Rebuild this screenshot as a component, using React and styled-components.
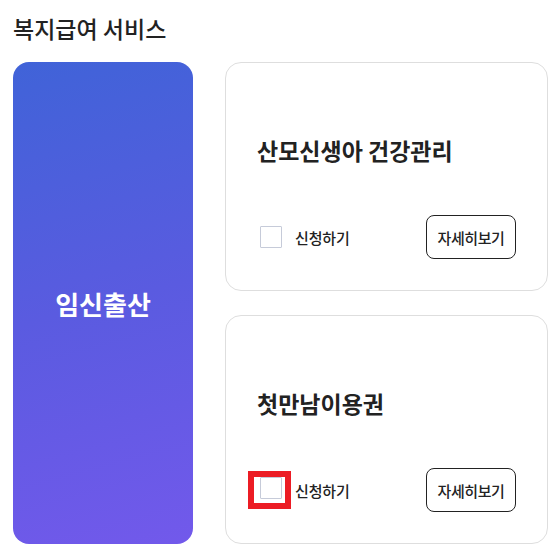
import React, { useState } from 'react'
import styled, { createGlobalStyle } from 'styled-components'

const GlobalStyle = createGlobalStyle`
  body {
    margin: 0;
    background: #ffffff;
    font-family: "Noto Sans CJK KR", "Noto Sans", sans-serif;
    color: #222222;
  }
`

const Page = styled.div`
  padding: 12px 5px 11px 13px;
`

const Heading = styled.h2`
  margin: 0 0 18px 0;
  font-size: 23px;
  line-height: 32px;
  font-weight: 500;
  color: #222222;
`

const Layout = styled.div`
  display: grid;
  grid-template-columns: 180px 1fr;
  gap: 32px;
  height: 482px;
`

const Category = styled.div`
  border-radius: 16px;
  background: linear-gradient(165deg, #4063d8 0%, #5a5be0 50%, #7259eb 100%);
  display: flex;
  align-items: center;
  justify-content: center;
  color: #ffffff;
  font-size: 26px;
  font-weight: 700;
`

const CardList = styled.div`
  display: grid;
  grid-template-rows: 1fr 1fr;
  gap: 24px;
`

const Card = styled.div`
  border: 1px solid #dedede;
  border-radius: 16px;
  padding: 0 31px 31px 31px;
  display: flex;
  flex-direction: column;
  justify-content: flex-end;
`

const CardTitle = styled.h3`
  margin: 0 0 50px 0;
  font-size: 23px;
  line-height: 30px;
  font-weight: 700;
  color: #222222;
`

const Actions = styled.div`
  display: flex;
  align-items: center;
  justify-content: space-between;
`

const ApplyLabel = styled.label`
  display: flex;
  align-items: center;
  gap: 13px;
  font-size: 15px;
  font-weight: 500;
  letter-spacing: -0.01em;
  cursor: pointer;
`

const BoxWrap = styled.span`
  display: flex;
  margin-left: ${p => (p.$marked ? '-9px' : '3px')};
  margin-right: ${p => (p.$marked ? '-9px' : '0')};
  padding: ${p => (p.$marked ? '0 3px 4px 6px' : '0')};
  border: ${p => (p.$marked ? '6px solid #ec1c24' : '0')};
`

const Box = styled.input.attrs({ type: 'checkbox' })`
  appearance: none;
  margin: 0;
  width: 22px;
  height: 22px;
  border: 1px solid #c6cbd9;
  border-radius: 1px;
  background: #ffffff;
  box-sizing: border-box;
  &:checked {
    background: #4a60dc;
    border-color: #4a60dc;
  }
`

const DetailButton = styled.button`
  width: 90px;
  height: 44px;
  border: 1px solid #222222;
  border-radius: 8px;
  background: #ffffff;
  font-family: "Noto Sans CJK KR", "Noto Sans", sans-serif;
  font-size: 15px;
  font-weight: 500;
  letter-spacing: -0.03em;
  color: #222222;
  cursor: pointer;
`

const services = [
  { id: 1, name: '산모신생아 건강관리' },
  { id: 2, name: '첫만남이용권', marked: true },
]

export default function App() {
  const [checked, setChecked] = useState({})

  return (
    <>
      <GlobalStyle />
      <Page>
        <Heading>복지급여 서비스</Heading>
        <Layout>
          <Category>임신출산</Category>
          <CardList>
            {services.map(s => (
              <Card key={s.id}>
                <CardTitle>{s.name}</CardTitle>
                <Actions>
                  <ApplyLabel>
                    <BoxWrap $marked={s.marked}>
                      <Box
                        checked={!!checked[s.id]}
                        onChange={e => setChecked({ ...checked, [s.id]: e.target.checked })}
                      />
                    </BoxWrap>
                    신청하기
                  </ApplyLabel>
                  <DetailButton>자세히보기</DetailButton>
                </Actions>
              </Card>
            ))}
          </CardList>
        </Layout>
      </Page>
    </>
  )
}
